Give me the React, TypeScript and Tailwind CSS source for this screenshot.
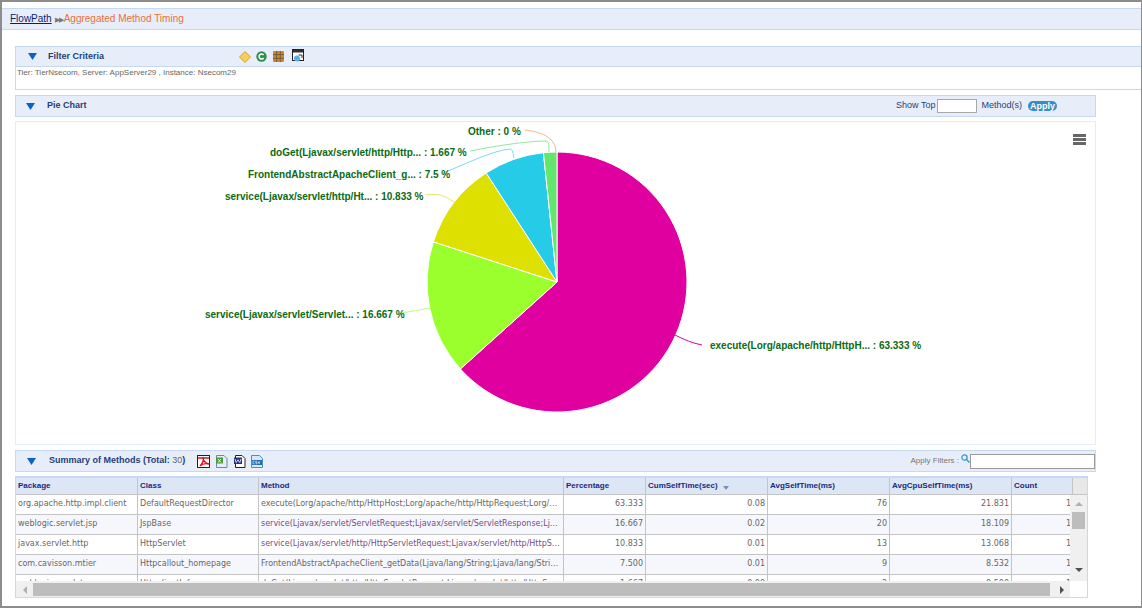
import type { ReactNode } from "react";

const cols = "grid grid-cols-[122px_121px_305px_82px_122px_122px_122px_61px]";

const headers = ["Package", "Class", "Method", "Percentage", "CumSelfTime(sec)", "AvgSelfTime(ms)", "AvgCpuSelfTime(ms)", "Count"];

const rows = [
  { pkg: "org.apache.http.impl.client", cls: "DefaultRequestDirector", method: "execute(Lorg/apache/http/HttpHost;Lorg/apache/http/HttpRequest;Lorg/apache/http/protocol/HttpContext;)", pct: "63.333", cum: "0.08", avg: "76", cpu: "21.831", count: "1", visited: false },
  { pkg: "weblogic.servlet.jsp", cls: "JspBase", method: "service(Ljavax/servlet/ServletRequest;Ljavax/servlet/ServletResponse;Ljavax/servlet/http/Http)", pct: "16.667", cum: "0.02", avg: "20", cpu: "18.109", count: "1", visited: true },
  { pkg: "javax.servlet.http", cls: "HttpServlet", method: "service(Ljavax/servlet/http/HttpServletRequest;Ljavax/servlet/http/HttpServletResponse;)V", pct: "10.833", cum: "0.01", avg: "13", cpu: "13.068", count: "1", visited: true },
  { pkg: "com.cavisson.mtier", cls: "Httpcallout_homepage", method: "FrontendAbstractApacheClient_getData(Ljava/lang/String;Ljava/lang/String;Ljava/lang/String;)", pct: "7.500", cum: "0.01", avg: "9", cpu: "8.532", count: "1", visited: false },
  { pkg: "weblogic.servlet", cls: "HttpclientInfo", method: "doGet(Ljavax/servlet/http/HttpServletRequest;Ljavax/servlet/http/HttpServletResponse;)V", pct: "1.667", cum: "0.00", avg: "2", cpu: "0.500", count: "1", visited: false },
];

// pie slices, clockwise from 12 o'clock
const slices = [
  { pct: 63.333, color: "#e000a0" },
  { pct: 16.667, color: "#9bff2e" },
  { pct: 10.833, color: "#dde000" },
  { pct: 7.5, color: "#26cbe8" },
  { pct: 1.667, color: "#63e56e" },
];

const labels = [
  { text: "Other : 0 %", x: 468, y: 135, line: "M525 130 C 540 132, 555 136, 556 152", stroke: "#f7b58a" },
  { text: "doGet(Ljavax/servlet/http/Http... : 1.667 %", x: 270, y: 156, line: "M470 151 C 500 145, 530 141, 546 141 C 549 141, 549 145, 549 152", stroke: "#8fe89a" },
  { text: "FrontendAbstractApacheClient_g... : 7.5 %", x: 248, y: 178, line: "M443 173 C 470 162, 495 150, 510 149 C 513 149, 513 154, 514 158", stroke: "#7adcf0" },
  { text: "service(Ljavax/servlet/http/Ht... : 10.833 %", x: 225, y: 200, line: "M425 195 C 440 193, 445 196, 454 202", stroke: "#e6e85a" },
  { text: "service(Ljavax/servlet/Servlet... : 16.667 %", x: 205, y: 318, line: "M402 313 L 430 308", stroke: "#bdff7a" },
  { text: "execute(Lorg/apache/http/HttpH... : 63.333 %", x: 710, y: 349, line: "M702 345 C 692 343, 685 340, 675 335", stroke: "#e000a0" },
];

function slicePath(start: number, end: number) {
  const cx = 557;
  const cy = 282;
  const r = 130;
  const a0 = (start / 100) * 2 * Math.PI;
  const a1 = (end / 100) * 2 * Math.PI;
  const x0 = cx + r * Math.sin(a0);
  const y0 = cy - r * Math.cos(a0);
  const x1 = cx + r * Math.sin(a1);
  const y1 = cy - r * Math.cos(a1);
  const large = end - start > 50 ? 1 : 0;
  return `M${cx} ${cy} L${x0} ${y0} A${r} ${r} 0 ${large} 1 ${x1} ${y1} Z`;
}

function Triangle() {
  return (
    <svg width="9" height="7" viewBox="0 0 9 7" className="shrink-0">
      <path d="M0 0H9L4.5 7Z" fill="#0b62c4" />
    </svg>
  );
}

function PieChart() {
  let acc = 0;
  return (
    <svg viewBox="16 122 1079 322" className="block w-[1079px] h-[322px]">
      {slices.map((s) => {
        const d = slicePath(acc, acc + s.pct);
        acc += s.pct;
        return <path key={s.color} d={d} fill={s.color} stroke="#fff" strokeWidth="1" />;
      })}
      {labels.map((l) => (
        <g key={l.text}>
          <path d={l.line} fill="none" stroke={l.stroke} strokeWidth="1" />
          <text x={l.x} y={l.y} fill="#0a6b12" fontSize="10" fontWeight="700" fontFamily="'Liberation Sans', sans-serif">
            {l.text}
          </text>
        </g>
      ))}
    </svg>
  );
}

function FilterIcons() {
  return (
    <div className="flex items-center">
      <svg width="12" height="12" viewBox="0 0 12 12" className="ml-[1px]">
        <path d="M6 .5 11.5 6 6 11.5.5 6Z" fill="#f6cf58" stroke="#d9a021" />
      </svg>
      <svg width="11" height="11" viewBox="0 0 11 11" className="ml-[5px]">
        <circle cx="5.5" cy="5.5" r="5.2" fill="#2f8f4a" />
        <path d="M7.6 4A2.5 2.5 0 1 0 7.6 7" fill="none" stroke="#fff" strokeWidth="1.5" />
      </svg>
      <svg width="11" height="11" viewBox="0 0 11 11" className="ml-[6px]">
        <rect width="11" height="11" rx="1" fill="#c98a2e" />
        <path d="M3.6 0V11M7.3 0V11M0 3.6H11M0 7.3H11" stroke="#7a5a34" strokeWidth="1" />
      </svg>
      <svg width="13" height="13" viewBox="0 0 13 13" className="ml-[8px] -mt-[3px]">
        <rect x=".5" y=".5" width="11" height="11" fill="#fff" stroke="#222" />
        <path d="M1 1H11V3.5H1Z" fill="#333" />
        <path d="M6.5 6H10V9" fill="none" stroke="#333" />
        <circle cx="5" cy="9.5" r="3" fill="#5ab0e0" />
      </svg>
    </div>
  );
}

function ExportIcons() {
  return (
    <div className="flex items-center gap-[5px]">
      <svg width="13" height="13" viewBox="0 0 13 13">
        <rect x=".5" y=".5" width="12" height="12" fill="#fff" stroke="#222" />
        <path d="M1 3H12M3 11C6 8 7 5 6 2C6 5 8 8 12 9C8 8 5 9 3 11Z" fill="none" stroke="#d8141c" strokeWidth="1.4" />
      </svg>
      <svg width="13" height="13" viewBox="0 0 13 13">
        <path d="M1.5.5H9L12 3.5V12.5H1.5Z" fill="#e4eef5" stroke="#6a8aa0" />
        <rect x="1" y="2.5" width="7" height="6" fill="#4c9a3c" />
        <path d="M3 4 6 7.5M6 4 3 7.5" stroke="#fff" strokeWidth=".9" />
      </svg>
      <svg width="13" height="13" viewBox="0 0 13 13">
        <path d="M2.5.5H9L12 3.5V12.5H2.5Z" fill="#fff" stroke="#222" />
        <rect x="1" y="2.5" width="8" height="6.5" fill="#27307e" />
        <path d="M2 4 3.2 7.5 5 4.8 6.8 7.5 8 4" fill="none" stroke="#fff" strokeWidth=".8" />
      </svg>
      <svg width="12" height="13" viewBox="0 0 12 13">
        <path d="M.5.5H8.5L11.5 3.5V12.5H.5Z" fill="#d6e8f6" stroke="#4a8fc4" />
        <rect x="1" y="5" width="10" height="5" fill="#1f6fae" />
        <path d="M3.4 6.2H2V8.8H3.4M6 6.2H4.6V7.5H6V8.8H4.6M7 6.2 8 8.8 9 6.2" fill="none" stroke="#fff" strokeWidth=".6" />
      </svg>
    </div>
  );
}

function SectionTitle({ title, indent }: { title: ReactNode; indent: string }) {
  return (
    <div className={"flex items-center " + indent}>
      <Triangle />
      {title}
    </div>
  );
}

export default function App() {
  return (
    <div className="w-[1142px] h-[608px] overflow-hidden bg-white border-l-2 border-t-2 border-b-2 border-r border-[#8c8c8c] font-['Liberation_Sans',sans-serif]">
      <div className="mt-[6px] h-[22px] flex items-center pl-[8px] bg-[#e8eef9] border-y border-[#c5d9f5] text-[10px] leading-none">
        <a className="text-[#0a1f7a] underline">FlowPath</a>
        <span className="ml-[3px] text-[#777] text-[7px] tracking-[-1px]">▶▶</span>
        <span className="ml-[1px] text-[#e8703a]">Aggregated Method Timing</span>
      </div>

      <div className="ml-[13px] mt-[16px] h-[44px] border-l border-b border-[#c5d9f5]">
        <div className="h-[21px] flex items-center bg-[#e8eef9] border-y border-[#c5d9f5]">
          <SectionTitle
            indent="pl-[12px] w-[222px]"
            title={<span className="ml-[11px] text-[9px] font-semibold text-[#1f3f7a]">Filter Criteria</span>}
          />
          <FilterIcons />
        </div>
        <p className="pl-[1px] pt-[1px] text-[8px] leading-[10px] text-[#666]">Tier: TierNsecom, Server: AppServer29 , Instance: Nsecom29</p>
      </div>

      <div className="ml-[13px] mt-[5px] w-[1081px] h-[22px] flex items-center justify-between bg-[#e8eef9] border border-[#c5d9f5]">
        <SectionTitle
          indent="pl-[10px]"
          title={<span className="ml-[12px] text-[9px] font-semibold text-[#1f3f7a]">Pie Chart</span>}
        />
        <div className="flex items-center pr-[38px] text-[9px] text-[#1f3f7a]">
          <span>Show Top</span>
          <input className="ml-[2px] w-[40px] h-[14px] bg-white border border-[#a8a8a8]" />
          <span className="ml-[4px]">Method(s)</span>
          <button className="ml-[6px] w-[29px] h-[10px] rounded-full bg-[#3a8cc8] text-white text-[9px] font-bold leading-[10px]">Apply</button>
        </div>
      </div>

      <div className="relative ml-[13px] mt-[4px] w-[1081px] h-[324px] border border-[#e3ecfa]">
        <PieChart />
        <div className="absolute top-[12px] right-[9px] w-[13px] flex flex-col gap-[1px]">
          <div className="h-[3px] bg-[#666]" />
          <div className="h-[3px] bg-[#666]" />
          <div className="h-[3px] bg-[#666]" />
        </div>
      </div>

      <div className="ml-[13px] mt-[5px] w-[1081px] h-[22px] flex items-center justify-between bg-[#e8eef9] border border-[#c5d9f5]">
        <div className="flex items-center">
          <SectionTitle
            indent="pl-[11px]"
            title={
              <span className="ml-[13px] text-[9px] font-semibold text-[#1f3f7a]">
                Summary of Methods (Total: <span className="font-normal text-[#666]">30</span>)
              </span>
            }
          />
          <div className="ml-[12px]">
            <ExportIcons />
          </div>
        </div>
        <div className="flex items-center text-[8px] text-[#777]">
          <span>Apply Filters :</span>
          <svg width="9" height="9" viewBox="0 0 9 9" className="ml-[2px] -mt-[5px]">
            <circle cx="3.5" cy="3.5" r="2.6" fill="none" stroke="#3a9ad0" strokeWidth="1.3" />
            <path d="M5.5 5.5 8.5 8.5" stroke="#3a9ad0" strokeWidth="1.5" />
          </svg>
          <input className="w-[125px] h-[15px] bg-white border border-[#9a9a9a]" />
        </div>
      </div>

      <div className="ml-[13px] mt-[4px] w-[1073px] h-[122px] flex flex-col overflow-hidden border-x border-b border-t-2 border-[#c5d9f5] font-['DejaVu_Sans',sans-serif]">
        <div className="flex h-[17px] shrink-0 border-b border-[#c4c4c4]">
          <div className={cols + " bg-[#dce6f4]"}>
            {headers.map((h) => (
              <div key={h} className="border-r border-[#c4c4c4] px-[2px] flex items-center gap-[5px] text-[8px] font-bold text-[#1a2a80] font-['Liberation_Sans',sans-serif]">
                {h}
                {h === "CumSelfTime(sec)" && (
                  <svg width="6" height="4" viewBox="0 0 6 4" className="mt-[3px]">
                    <path d="M0 0H6L3 4Z" fill="#7a8fc0" />
                  </svg>
                )}
              </div>
            ))}
          </div>
          <div className="flex-1 bg-[#e8e8e8]" />
        </div>
        <div className="flex h-[86px] shrink-0">
          <div className="w-[1054px] overflow-hidden">
            {rows.map((r, i) => (
              <div key={r.pkg} className={cols + " h-[20px] border-b border-[#c4c4c4] text-[8px] leading-[18px] text-[#666] " + (i % 2 === 1 ? "bg-[#f5f7fd]" : "bg-white")}>
                <div className="border-r border-[#c4c4c4] pl-[2px] truncate">{r.pkg}</div>
                <div className="border-r border-[#c4c4c4] pl-[2px] truncate">{r.cls}</div>
                <div className={"border-r border-[#c4c4c4] px-[2px] truncate " + (r.visited ? "text-[#7a4a86]" : "")}>{r.method}</div>
                <div className="border-r border-[#c4c4c4] pr-[2px] text-right">{r.pct}</div>
                <div className="border-r border-[#c4c4c4] pr-[2px] text-right">{r.cum}</div>
                <div className="border-r border-[#c4c4c4] pr-[2px] text-right">{r.avg}</div>
                <div className="border-r border-[#c4c4c4] pr-[2px] text-right">{r.cpu}</div>
                <div className="pr-[2px] text-right">{r.count}</div>
              </div>
            ))}
          </div>
          <div className="w-[17px] shrink-0 bg-[#f0f0f0] flex flex-col items-center pt-[7px]">
            <svg width="8" height="4" viewBox="0 0 8 4"><path d="M0 4H8L4 0Z" fill="#b0b0b0" /></svg>
            <div className="mt-[6px] w-[13px] h-[17px] bg-[#bdbdbd]" />
            <svg width="8" height="4" viewBox="0 0 8 4" className="mt-[39px]"><path d="M0 0H8L4 4Z" fill="#505050" /></svg>
          </div>
        </div>
        <div className="flex h-[17px] shrink-0">
          <div className="w-[1054px] bg-[#f0f0f0] flex items-center">
            <svg width="4" height="8" viewBox="0 0 4 8" className="ml-[7px]"><path d="M4 0V8L0 4Z" fill="#b0b0b0" /></svg>
            <div className="ml-[6px] w-[1017px] h-[13px] bg-[#bdbdbd]" />
            <svg width="4" height="8" viewBox="0 0 4 8" className="ml-[10px]"><path d="M0 0V8L4 4Z" fill="#505050" /></svg>
          </div>
        </div>
      </div>
    </div>
  );
}
